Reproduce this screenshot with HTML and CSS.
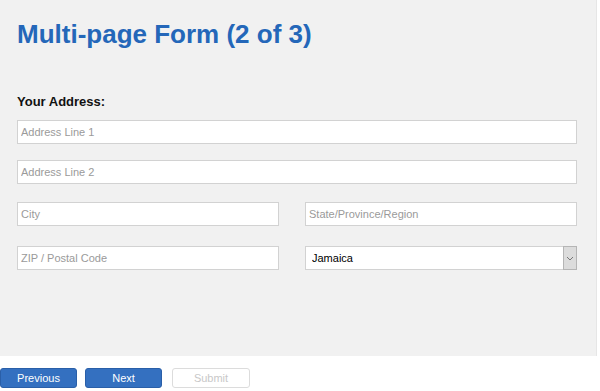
FILE: index.html
```html
<!DOCTYPE html>
<html lang="en">
<head>
  <meta charset="UTF-8">
  <title>Multi-page Form (2 of 3)</title>
  <link rel="stylesheet" href="styles.css">
</head>
<body>

  <!-- Form Panel -->
  <div class="panel">
    <h1>Multi-page Form (2 of 3)</h1>

    <form class="address-form">
      <label class="section-label">Your Address:</label>

      <input type="text" class="field field-line1" placeholder="Address Line 1">
      <input type="text" class="field field-line2" placeholder="Address Line 2">

      <div class="row row-city">
        <input type="text" class="field" placeholder="City">
        <input type="text" class="field" placeholder="State/Province/Region">
      </div>

      <div class="row row-zip">
        <input type="text" class="field" placeholder="ZIP / Postal Code">
        <div class="select-wrap">
          <select class="field select">
            <option>Jamaica</option>
          </select>
          <span class="select-arrow">
            <svg width="8" height="5" viewBox="0 0 8 5"><path d="M1 1 L4 4 L7 1" fill="none" stroke="#777" stroke-width="1"/></svg>
          </span>
        </div>
      </div>
    </form>
  </div>

  <!-- Navigation Buttons -->
  <div class="nav">
    <button class="btn btn-primary">Previous</button>
    <button class="btn btn-primary btn-next">Next</button>
    <button class="btn btn-disabled" disabled>Submit</button>
  </div>

</body>
</html>
```

FILE: styles.css
```css
/* Global Styles */
body {
  font-family: "Liberation Sans", Arial, sans-serif;
  background: #fff;
  margin: 0;
  padding: 0;
}

.panel {
  background: #f1f1f1;
  width: 597px;
  height: 356px;
  box-sizing: border-box;
  padding: 19px 19px 0 17px;
  border-right: 1px solid #e6e6e6;
}

h1 {
  margin: 0;
  font-size: 26px;
  line-height: 30px;
  font-weight: bold;
  color: #2467b9;
}

.address-form {
  margin-top: 45px;
  display: flex;
  flex-direction: column;
}

.section-label {
  font-size: 13px;
  line-height: 15px;
  font-weight: bold;
  color: #111;
  margin-bottom: 11px;
}

.field {
  display: block;
  box-sizing: border-box;
  width: 100%;
  height: 24px;
  margin: 0;
  padding: 0 3px;
  border: 1px solid #d2d2d2;
  border-radius: 0;
  background: #fff;
  font-family: "Liberation Sans", Arial, sans-serif;
  font-size: 11px;
  color: #111;
  outline: none;
}

.field::placeholder {
  color: #9a9a9a;
}

.field-line2 {
  margin-top: 16px;
}

.row {
  display: grid;
  grid-template-columns: 262px 1fr;
  column-gap: 26px;
}

.row-city {
  margin-top: 18px;
}

.row-zip {
  margin-top: 20px;
}

/* Select with custom arrow box */
.select-wrap {
  position: relative;
}

.select {
  -webkit-appearance: none;
  appearance: none;
  padding-left: 6px;
  color: #000;
}

.select-arrow {
  position: absolute;
  top: 0;
  right: 0;
  width: 14px;
  height: 24px;
  box-sizing: border-box;
  background: #dcdcdc;
  border: 1px solid #b5b5b5;
  display: flex;
  align-items: center;
  justify-content: center;
  pointer-events: none;
}

/* Navigation */
.nav {
  display: flex;
  margin-top: 12px;
}

.btn {
  width: 77px;
  height: 20px;
  box-sizing: border-box;
  padding: 0;
  border-radius: 3px;
  font-family: "Liberation Sans", Arial, sans-serif;
  font-size: 11px;
  line-height: 18px;
  cursor: pointer;
}

.btn-primary {
  background: #3470c0;
  border: 1px solid #2a5fa8;
  color: #fff;
}

.btn-next {
  margin-left: 8px;
}

.btn-disabled {
  width: 78px;
  margin-left: 10px;
  background: #fff;
  border: 1px solid #dcdcdc;
  color: #c8c8c8;
  cursor: default;
}
```
